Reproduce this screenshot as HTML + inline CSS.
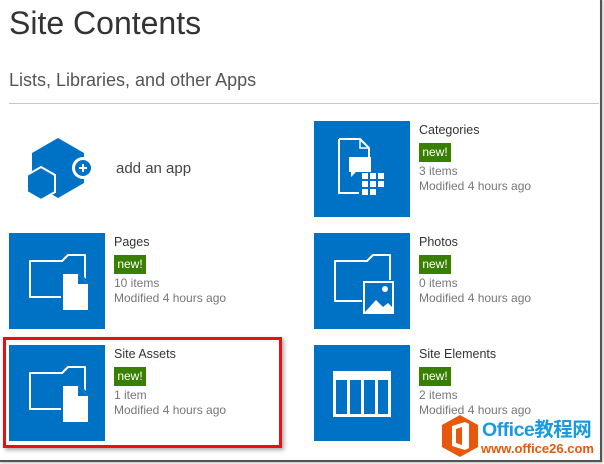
<!DOCTYPE html>
<html><head><meta charset="utf-8"><style>
*{margin:0;padding:0;box-sizing:border-box}
body{width:604px;height:464px;background:#fff;position:relative;overflow:hidden;font-family:"Segoe UI","Liberation Sans",sans-serif;color:#444}
.a{position:absolute}
.tile{position:absolute;width:96px;height:96px;background:#0072c6}
.t{position:absolute;font-size:12.5px;color:#333;line-height:15px}
.new{position:absolute;background:#3a8000;color:#fff;font-size:12px;line-height:19px;width:32px;text-align:center}
.g{position:absolute;font-size:12px;color:#777;line-height:15px;white-space:nowrap}
</style></head><body>
<div class="a" style="left:9px;top:5px;font-size:32px;font-weight:normal;color:#333;">Site Contents</div>
<div class="a" style="left:9px;top:70px;font-size:18px;color:#555">Lists, Libraries, and other Apps</div>
<div class="a" style="left:9px;top:103px;width:590px;height:1px;background:#c6c6c6"></div>

<svg class="a" style="left:27px;top:138px" width="70" height="64" viewBox="0 0 70 64">
<polygon points="31,0 57,15 57,45 31,60 5,45 5,15" fill="#0072c6"/>
<polygon points="14,29 28,37 28,54 14,62 0,54 0,37" fill="#0072c6" stroke="#fff" stroke-width="2"/>
<circle cx="56" cy="30" r="11" fill="#fff"/><circle cx="56" cy="30" r="8" fill="#0072c6"/>
<rect x="52" y="29" width="8" height="2" fill="#fff"/><rect x="55" y="26" width="2" height="8" fill="#fff"/>
</svg>
<div class="a" style="left:116px;top:160px;font-size:15px;color:#444">add an app</div>

<!-- Categories -->
<div class="tile" style="left:314px;top:121px">
<svg width="96" height="96"><path d="M25 18h21l9 9v22" fill="none" stroke="#fff" stroke-width="2"/><path d="M46 18v9h9" fill="none" stroke="#fff" stroke-width="1.5"/><path d="M25 18v54h20" fill="none" stroke="#fff" stroke-width="2"/>
<path d="M35 36h22v15H42l-5 5v-5h-2z" fill="#fff"/>
<g fill="#fff"><rect x="48" y="52" width="6" height="6"/><rect x="56" y="52" width="6" height="6"/><rect x="64" y="52" width="6" height="6"/><rect x="48" y="60" width="6" height="6"/><rect x="56" y="60" width="6" height="6"/><rect x="64" y="60" width="6" height="6"/><rect x="48" y="68" width="6" height="6"/><rect x="56" y="68" width="6" height="6"/></g></svg></div>
<div class="t" style="left:419px;top:123px">Categories</div><div class="new" style="left:419px;top:143px">new!</div>
<div class="g" style="left:419px;top:164px">3 items</div><div class="g" style="left:419px;top:179px">Modified 4 hours ago</div>

<!-- Pages -->
<div class="tile" style="left:9px;top:233px">
<svg width="96" height="96"><path d="M21 28h32l6-6h17v42H21z" fill="none" stroke="#fff" stroke-width="2" stroke-linejoin="round"/>
<path d="M52 39h18l11 11v29H52z" fill="#0072c6"/><path d="M54 41h15l10 10v26H54z" fill="#fff"/><path d="M69 41v10h10z" fill="#0072c6"/></svg></div>
<div class="t" style="left:114px;top:235px">Pages</div><div class="new" style="left:114px;top:255px">new!</div>
<div class="g" style="left:114px;top:276px">10 items</div><div class="g" style="left:114px;top:291px">Modified 4 hours ago</div>

<!-- Photos -->
<div class="tile" style="left:314px;top:233px">
<svg width="96" height="96"><path d="M21 28h32l6-6h17v46H21z" fill="none" stroke="#fff" stroke-width="2" stroke-linejoin="round"/>
<rect x="48" y="47" width="33" height="35" fill="#0072c6"/><rect x="50" y="49" width="29" height="31" fill="none" stroke="#fff" stroke-width="2"/>
<circle cx="71" cy="56" r="3" fill="#fff"/><path d="M51 79l11-12 7 7 5-4 5 5v4z" fill="#fff"/></svg></div>
<div class="t" style="left:419px;top:235px">Photos</div><div class="new" style="left:419px;top:255px">new!</div>
<div class="g" style="left:419px;top:276px">0 items</div><div class="g" style="left:419px;top:291px">Modified 4 hours ago</div>

<!-- Site Assets -->
<div class="tile" style="left:9px;top:345px">
<svg width="96" height="96"><path d="M21 28h32l6-6h17v42H21z" fill="none" stroke="#fff" stroke-width="2" stroke-linejoin="round"/>
<path d="M52 39h18l11 11v29H52z" fill="#0072c6"/><path d="M54 41h15l10 10v26H54z" fill="#fff"/><path d="M69 41v10h10z" fill="#0072c6"/></svg></div>
<div class="t" style="left:114px;top:347px">Site Assets</div><div class="new" style="left:114px;top:367px">new!</div>
<div class="g" style="left:114px;top:388px">1 item</div><div class="g" style="left:114px;top:403px">Modified 4 hours ago</div>

<!-- Site Elements -->
<div class="tile" style="left:314px;top:345px">
<svg width="96" height="96"><rect x="19" y="26" width="58" height="46" fill="#fff"/>
<g fill="#0072c6"><rect x="22" y="35" width="11" height="34"/><rect x="36" y="35" width="11" height="34"/><rect x="50" y="35" width="11" height="34"/><rect x="64" y="35" width="10" height="34"/></g></svg></div>
<div class="t" style="left:419px;top:347px">Site Elements</div><div class="new" style="left:419px;top:367px">new!</div>
<div class="g" style="left:419px;top:388px">2 items</div><div class="g" style="left:419px;top:403px">Modified 4 hours ago</div>

<!-- red box -->
<div class="a" style="left:3px;top:337px;width:279px;height:111px;border:3px solid #e81010;box-shadow:2px 2px 4px rgba(0,0,0,.35)"></div>

<!-- frame -->
<div class="a" style="left:600px;top:0;width:2px;height:462px;background:#555;box-shadow:1px 0 2px rgba(0,0,0,.3)"></div>
<div class="a" style="left:0;top:460px;width:602px;height:2px;background:#555;box-shadow:0 1px 2px rgba(0,0,0,.3)"></div>

<!-- logo -->
<svg class="a" style="left:440px;top:414px" width="40" height="44" viewBox="0 0 40 44">
<polygon points="20,1 38,11 38,33 20,43 2,33 2,11" fill="#e8580c"/>
<path d="M12 12l13-4 4 2v24l-4 2-13-4z" fill="#fff"/><path d="M16 15l6-2v18l-6-2z" fill="#e8580c"/></svg>
<div class="a" style="left:482px;top:418px;font-size:19.5px;font-weight:bold;color:#1a9be0;font-family:'Liberation Sans','Noto Sans CJK SC',sans-serif;line-height:24px;letter-spacing:-0.5px">Office教程网</div>
<div class="a" style="left:481px;top:441px;font-size:13px;font-weight:bold;color:#e8580c;line-height:15px">www.office26.com</div>
</body></html>
